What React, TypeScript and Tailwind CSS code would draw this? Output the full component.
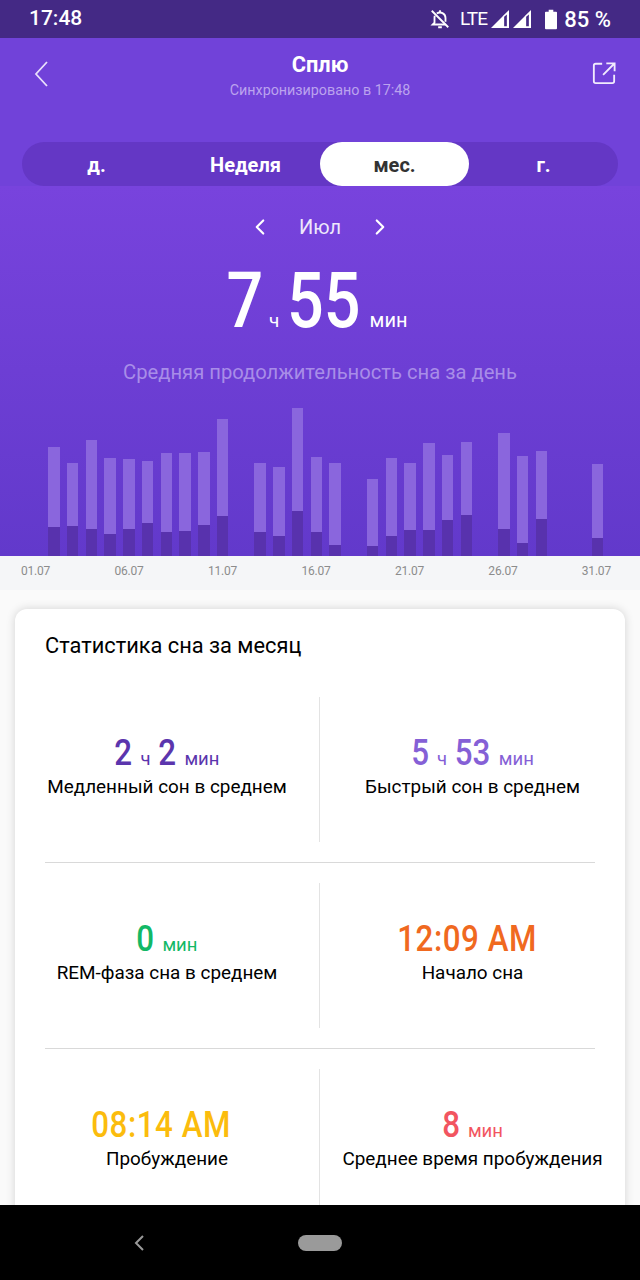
import { ChevronLeft, ChevronRight } from 'lucide-react';

// [top, split] in page pixels; null marks a day with no sleep data
const BAR_BOTTOM = 556;
const bars: ([number, number] | null)[] = [
  [447, 527], [463, 526], [440, 529], [458, 534], [459, 529], [461, 523], [453, 532], [453, 531], [452, 525], [419, 516],
  null,
  [463, 532], [467, 536], [408, 511], [457, 532], [463, 545],
  null,
  [479, 546], [458, 536], [463, 530], [443, 530], [455, 520], [442, 515],
  null,
  [433, 529], [456, 543], [451, 519],
  null, null,
  [464, 538],
];

const axisLabels = ['01.07', '06.07', '11.07', '16.07', '21.07', '26.07', '31.07'];

interface Stat {
  color: string;
  label: string;
  value: [string, string?][];
}

const rows: Stat[][] = [
  [
    { color: 'text-[#5b35ad]', label: 'Медленный сон в среднем', value: [['2', 'ч'], ['2', 'мин']] },
    { color: 'text-[#8560d6]', label: 'Быстрый сон в среднем', value: [['5', 'ч'], ['53', 'мин']] },
  ],
  [
    { color: 'text-[#12b866]', label: 'REM-фаза сна в среднем', value: [['0', 'мин']] },
    { color: 'text-[#f0691f]', label: 'Начало сна', value: [['12:09 AM']] },
  ],
  [
    { color: 'text-[#fbbc0d]', label: 'Пробуждение', value: [['08:14 AM']] },
    { color: 'text-[#f25560]', label: 'Среднее время пробуждения', value: [['8', 'мин']] },
  ],
];

// the app's digit font is narrower than Roboto, so squeeze the glyphs and pull the box in to match
function Digits({ text, className, perChar }: { text: string; className: string; perChar: number }) {
  return (
    <span className={`inline-block ${className}`} style={{ marginInline: -perChar * text.length }}>
      {text}
    </span>
  );
}

function StatCell({ stat, className }: { stat: Stat; className: string }) {
  return (
    <div className={`flex flex-col items-center pt-[35px] ${className}`}>
      <div className={`flex items-baseline h-[42px] ${stat.color}`}>
        {stat.value.map(([num, unit], i) => (
          <span key={i} className="flex items-baseline">
            <Digits
              text={num}
              perChar={1.300}
              className={`scale-x-[0.87] text-[36px] leading-[42px] font-medium whitespace-pre ${unit ? '' : 'tracking-[0.6px] pr-[13px]'}`}
            />
            {unit && <span className={`text-[18.500px] ml-[8px] ${i < stat.value.length - 1 ? 'mr-[8px]' : ''}`}>{unit}</span>}
          </span>
        ))}
      </div>
      <div className="text-[18.900px] leading-[24px] text-black mt-[1px]">{stat.label}</div>
    </div>
  );
}

function SignalIcon({ className }: { className: string }) {
  return (
    <svg width="20" height="20" viewBox="0 0 20 20" className={className}>
      <path d="M1 19 19 1v18z" fill="white" />
      <path d="M13.500 7.500V18h4V4z" fill="#442985" stroke="white" strokeWidth="1.300" />
    </svg>
  );
}

export default function App() {
  return (
    <div className="w-[640px] h-[1280px] flex flex-col overflow-hidden bg-[#fafafa] font-['Roboto',sans-serif]">
      {/* Status bar */}
      <div className="h-[38px] shrink-0 bg-[#442985] flex items-center justify-between pl-[29px] pr-[29px] text-white">
        <span className="text-[21px] font-medium">17:48</span>
        <div className="flex items-center">
          <svg width="22" height="22" viewBox="0 0 24 24" fill="none" stroke="white" strokeWidth="2" className="mr-[9px]">
            <path d="M18 15V11a6 6 0 0 0-9.500-4.900M6.300 8.500C6.100 9.300 6 10.100 6 11v5l-2 2h14" />
            <path d="M10 21h4M12 2.500v2M3 3l18 18" />
          </svg>
          <span className="text-[19px] mr-[3px] tracking-[-0.8px]">LTE</span>
          <SignalIcon className="mr-[2px]" />
          <SignalIcon className="mr-[13px]" />
          <svg width="12" height="21" viewBox="0 0 13 21" className="mr-[7px]">
            <path d="M4 0h5v2h3a1 1 0 0 1 1 1v17a1 1 0 0 1-1 1H1a1 1 0 0 1-1-1V3a1 1 0 0 1 1-1h3z" fill="white" />
          </svg>
          <span className="text-[22px] font-medium">85 %</span>
        </div>
      </div>

      {/* Header */}
      <div className="h-[148px] shrink-0 bg-[#7142d9] flex flex-col">
        <div className="h-[104px] flex items-start justify-between pl-[24px] pr-[24px] pt-[17px]">
          <svg width="24" height="36" viewBox="-5 0 24 36" fill="none" stroke="#e9e0fb" strokeWidth="1.800" className="mt-[1px]">
            <path d="M18 6 7 18l11 12" />
          </svg>
          <div className="flex flex-col items-center text-center">
            <span className="text-[21.800px] leading-[20px] font-bold text-white">Сплю</span>
            <span className="text-[14.300px] leading-[18px] mt-[6px] text-[#bba3ee]">Синхронизировано в 17:48</span>
          </div>
          <svg width="24" height="24" viewBox="0 0 26 26" fill="none" stroke="#f1ebfd" strokeWidth="2" className="mt-[6px]">
            <path d="M11 3H4a2 2 0 0 0-2 2v17a2 2 0 0 0 2 2h18a2 2 0 0 0 2-2v-7" />
            <path d="M12 15 24 3M15.500 2.500H24.500V11" />
          </svg>
        </div>
        <div className="mx-[22px] h-[44px] rounded-full bg-[#6437c5] grid grid-cols-4 text-[20px] font-bold text-white">
          <div className="flex items-center justify-center pt-[1px]">д.</div>
          <div className="flex items-center justify-center pt-[1px]">Неделя</div>
          <div className="flex items-center justify-center pt-[1px] rounded-full bg-white text-[#333333]">мес.</div>
          <div className="flex items-center justify-center pt-[1px]">г.</div>
        </div>
      </div>

      {/* Chart */}
      <div className="h-[370px] shrink-0 bg-gradient-to-b from-[#7843dd] to-[#6239cb] flex flex-col items-center">
        <div className="flex items-center mt-[27px] h-[28px] text-white">
          <ChevronLeft size={26} strokeWidth={2} />
          <span className="text-[20px] text-[#eee8fb] mx-[26px]">Июл</span>
          <ChevronRight size={26} strokeWidth={2} />
        </div>
        <div className="flex items-baseline text-white mt-[22px] h-[77px] pr-[6px]">
          <Digits text="7" perChar={3.600} className="scale-x-[0.84] text-[77px] leading-[77px] font-medium" />
          <span className="text-[19px] ml-[6px] mr-[8px]">ч</span>
          <Digits text="55" perChar={3.600} className="scale-x-[0.84] text-[77px] leading-[77px] font-medium" />
          <span className="text-[20px] ml-[9px]">мин</span>
        </div>
        <div className="text-[20.200px] leading-[24px] text-[#a88de8] mt-[20px]">Средняя продолжительность сна за день</div>
        <div className="mt-auto w-full pl-[48px] flex items-end gap-[7.250px]">
          {bars.map((bar, i) => (
            <div key={i} className="w-[11.500px] shrink-0 flex flex-col">
              {bar && (
                <>
                  <div className="bg-[#8a66dd]" style={{ height: bar[1] - bar[0] }} />
                  <div className="bg-[#5832ad]" style={{ height: BAR_BOTTOM - bar[1] }} />
                </>
              )}
            </div>
          ))}
        </div>
      </div>

      {/* Axis labels */}
      <div className="h-[34px] shrink-0 bg-[#f5f6f8] flex justify-between pl-[21px] pr-[29px] pt-[7px] text-[12px] leading-[16px] tracking-[-0.2px] text-[#8c8c8c]">
        {axisLabels.map((label) => (
          <span key={label}>{label}</span>
        ))}
      </div>

      {/* Stats card */}
      <div className="flex-1 min-h-0 px-[15px] pt-[19px] overflow-hidden">
        <div className="h-[700px] rounded-[12px] bg-white shadow-[0_0_10px_rgba(0,0,0,0.16)]">
          <div className="text-[21.800px] leading-[28px] text-black pt-[23px] px-[30px]">Статистика сна за месяц</div>
          <div className="mt-[37px] flex flex-col gap-[20px]">
            {rows.map((row, i) => (
              <div key={i} className="flex flex-col gap-[20px]">
                <div className="flex h-[145px]">
                  <StatCell stat={row[0]} className="w-[304px]" />
                  <div className="w-px bg-[#e3e3e3]" />
                  <StatCell stat={row[1]} className="flex-1" />
                </div>
                {i < rows.length - 1 && <div className="mx-[30px] h-px bg-[#d9d9d9]" />}
              </div>
            ))}
          </div>
        </div>
      </div>

      {/* Nav bar */}
      <div className="h-[75px] shrink-0 bg-black flex items-center justify-center">
        <div className="w-[44px] h-[16px] rounded-full bg-[#9a9a9a] relative">
          <svg width="14" height="20" viewBox="0 0 14 20" fill="none" stroke="#9a9a9a" strokeWidth="2" className="absolute left-[-165px] top-[-2px]">
            <path d="M10 3 3 10l7 7" />
          </svg>
        </div>
      </div>
    </div>
  );
}
